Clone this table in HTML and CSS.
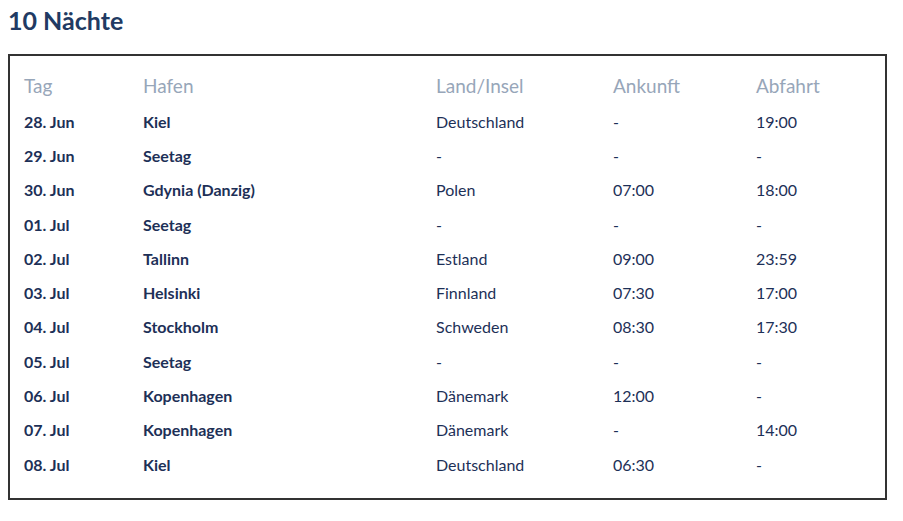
FILE: index.html
```html
<!DOCTYPE html>
<html lang="de">
<head>
<meta charset="utf-8">
<title>10 Nächte</title>
<link rel="stylesheet" href="styles.css">
</head>
<body>
<h2 class="title">10 Nächte</h2>
<div class="box">
  <table class="route">
    <thead>
      <tr><th>Tag</th><th>Hafen</th><th>Land/Insel</th><th>Ankunft</th><th>Abfahrt</th></tr>
    </thead>
    <tbody>
      <tr><td class="b">28. Jun</td><td class="b">Kiel</td><td>Deutschland</td><td>-</td><td>19:00</td></tr>
      <tr><td class="b">29. Jun</td><td class="b">Seetag</td><td>-</td><td>-</td><td>-</td></tr>
      <tr><td class="b">30. Jun</td><td class="b">Gdynia (Danzig)</td><td>Polen</td><td>07:00</td><td>18:00</td></tr>
      <tr><td class="b">01. Jul</td><td class="b">Seetag</td><td>-</td><td>-</td><td>-</td></tr>
      <tr><td class="b">02. Jul</td><td class="b">Tallinn</td><td>Estland</td><td>09:00</td><td>23:59</td></tr>
      <tr><td class="b">03. Jul</td><td class="b">Helsinki</td><td>Finnland</td><td>07:30</td><td>17:00</td></tr>
      <tr><td class="b">04. Jul</td><td class="b">Stockholm</td><td>Schweden</td><td>08:30</td><td>17:30</td></tr>
      <tr><td class="b">05. Jul</td><td class="b">Seetag</td><td>-</td><td>-</td><td>-</td></tr>
      <tr><td class="b">06. Jul</td><td class="b">Kopenhagen</td><td>Dänemark</td><td>12:00</td><td>-</td></tr>
      <tr><td class="b">07. Jul</td><td class="b">Kopenhagen</td><td>Dänemark</td><td>-</td><td>14:00</td></tr>
      <tr><td class="b">08. Jul</td><td class="b">Kiel</td><td>Deutschland</td><td>06:30</td><td>-</td></tr>
    </tbody>
  </table>
</div>
</body>
</html>
```
FILE: styles.css
```css
html, body {
  background: #ffffff;
}
body {
  margin: 8px;
  font-family: "Lato", "Noto Sans", "Liberation Sans", sans-serif;
  color: #1d3057;
}
.title {
  margin: 0;
  padding-top: 0;
  height: 46px;
  font-size: 25px;
  font-weight: 700;
  line-height: 25px;
  color: #213a63;
}
.box {
  width: 875px;
  border: 2px solid #333333;
  padding: 10px 0 17px 0;
}
.route {
  border-collapse: collapse;
  width: 100%;
  table-layout: fixed;
}
.route th:nth-child(1) { width: 105px; }
.route th:nth-child(2) { width: 279px; }
.route th:nth-child(3) { width: 163px; }
.route th:nth-child(4) { width: 129px; }
.route th {
  text-align: left;
  font-weight: 400;
  font-size: 19px;
  color: #97a6b9;
  height: 38px;
  padding: 0 0 0 14px;
  vertical-align: middle;
}
.route td {
  font-size: 16px;
  height: 34.3px;
  padding: 0 0 0 14px;
  vertical-align: middle;
  color: #1d3057;
}
.route td.b {
  font-weight: 700;
}
```
